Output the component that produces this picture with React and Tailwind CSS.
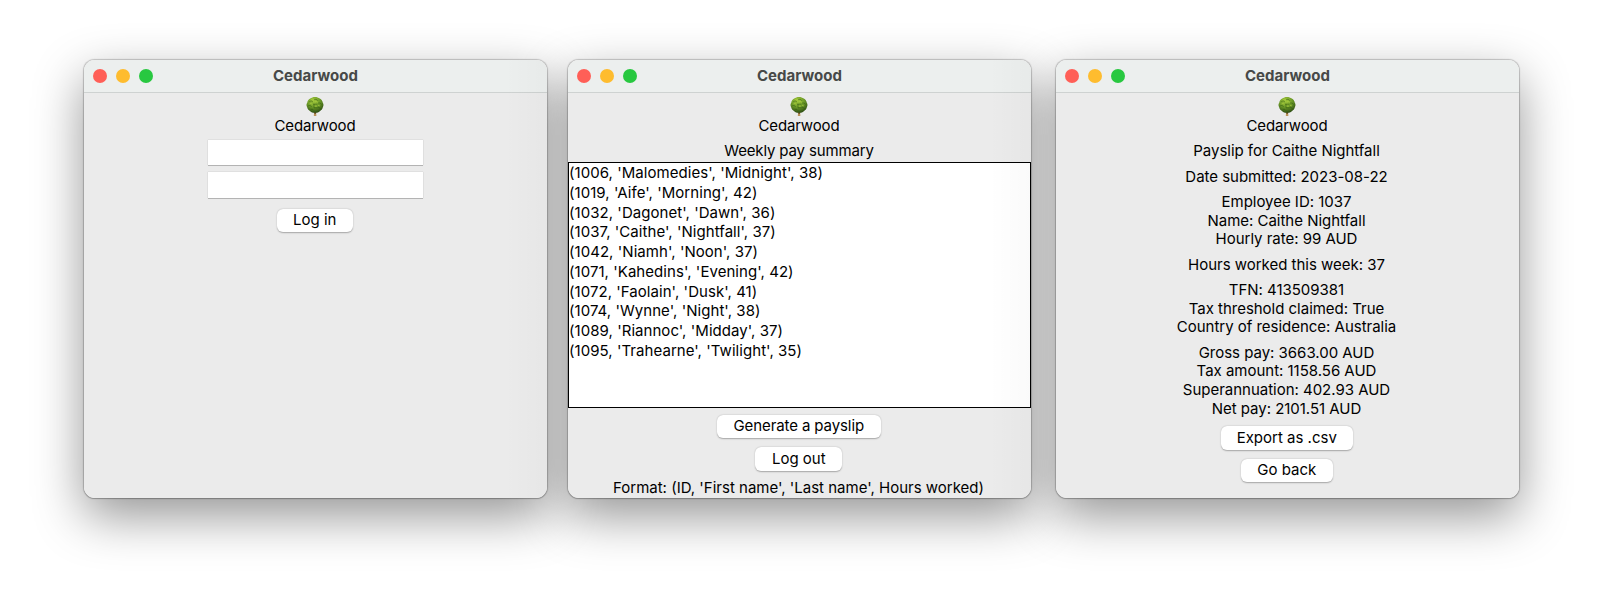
const TreeIcon = () => (
  <svg viewBox="0 0 18 20" className="mr-px block h-5 w-[18px] shrink-0">
    <defs>
      <radialGradient id="crown" cx="0.42" cy="0.25" r="0.78">
        <stop offset="0" stopColor="#a3c93c" />
        <stop offset="0.5" stopColor="#6c9a28" />
        <stop offset="1" stopColor="#2a4a12" />
      </radialGradient>
    </defs>
    <path d="M7.400 15h3.200l-.4 2.400.2 2.600H7.800l.2-2.600z" fill="#b8925a" />
    <path d="M8.300 15h1.600l-.2 3h-1.100z" fill="#5e3f1e" />
    <path
      d="M9 .9c1.900 0 3.400.5 4.800 1.600 1.700 1 2.600 2.300 2.900 3.900 1 1.500 1 3.200.2 4.700-.3 1.800-1.400 3.200-3.100 4.100-1.400 1.200-3 1.700-4.800 1.500-1.800.2-3.400-.3-4.800-1.500-1.700-.9-2.800-2.300-3.100-4.100-.8-1.500-.8-3.200.2-4.700.3-1.600 1.200-2.900 2.900-3.900C5.600 1.400 7.100.9 9 .9z"
      fill="url(#crown)"
    />
    <g fill="none" stroke="#2f5610" strokeWidth="0.8" strokeOpacity="0.65" strokeLinecap="round">
      <path d="M3.600 5.500c1.200-.9 2.400-.6 3.200.4M8.500 3.600c1.200-.6 2.600-.1 3.200.8M12.500 7c1.200-.3 2.300.2 2.900 1.200M7.500 8.200h3.500M2.600 9.600c1.100-.5 2.300 0 2.900 1M8 8.300v3.500h3M12 11.500c.9-.2 1.900.2 2.300.9M5 13.500c.9-.5 2-.2 2.600.6" />
    </g>
    <g fill="none" stroke="#bddb45" strokeWidth="0.8" strokeOpacity="0.7" strokeLinecap="round">
      <path d="M5 3.700c.7-.6 1.500-.8 2.300-.5M9.500 5.700c.7-.3 1.500-.1 2 .4M4 7.700c.7-.3 1.500-.1 2 .4M9 10.200h1.500M12.500 9.500l1 .3" />
    </g>
  </svg>
);

const Window = ({ shaded, children }) => (
  <section className="h-[438px] w-[463px] shrink-0 rounded-[11px] shadow-[0_0_1px_0.5px_rgba(0,0,0,0.2),0_1px_1px_rgba(0,0,0,0.12),0_18px_50px_rgba(0,0,0,0.42)]">
    <div className="relative z-10 flex h-full flex-col overflow-hidden rounded-[11px] bg-[#ebebeb]">
      <header className="grid h-[33px] shrink-0 grid-cols-[1fr_auto_1fr] items-center border-b border-[#ced2d1] bg-[#ecefee] px-[9px]">
        <div className="flex gap-[9px]">
          <span className="size-[14px] rounded-full bg-[#ff5f57]" />
          <span className="size-[14px] rounded-full bg-[#febc2e]" />
          <span className="size-[14px] rounded-full bg-[#28c840]" />
        </div>
        <h1 className="pb-[2px] text-[15px] leading-none font-bold tracking-[0.02px] text-[#474948]">Cedarwood</h1>
      </header>
      <div className="flex flex-1 flex-col items-center pt-[3px]">
        <TreeIcon />
        <p className="mt-px mr-px tracking-[-0.15px]">Cedarwood</p>
        {children}
      </div>
      {shaded && (
        <div className="pointer-events-none absolute inset-y-0 right-0 w-[42px] bg-linear-to-r from-black/0 to-black/[0.02]" />
      )}
    </div>
  </section>
);

const Button = ({ className, children }) => (
  <button
    className={`mr-[1.500px] flex h-[23.500px] shrink-0 items-center justify-center rounded-[6px] bg-white shadow-[0_0.5px_1.500px_rgba(0,0,0,0.3)] ${className}`}
  >
    {children}
  </button>
);

const Field = ({ className }) => (
  <input
    className={`h-[25.500px] w-[215px] bg-white shadow-[0_0_1px_rgba(0,0,0,0.25),0_1px_0.500px_rgba(0,0,0,0.2)] outline-none ${className}`}
  />
);

const employees = [
  "(1006, 'Malomedies', 'Midnight', 38)",
  "(1019, 'Aife', 'Morning', 42)",
  "(1032, 'Dagonet', 'Dawn', 36)",
  "(1037, 'Caithe', 'Nightfall', 37)",
  "(1042, 'Niamh', 'Noon', 37)",
  "(1071, 'Kahedins', 'Evening', 42)",
  "(1072, 'Faolain', 'Dusk', 41)",
  "(1074, 'Wynne', 'Night', 38)",
  "(1089, 'Riannoc', 'Midday', 37)",
  "(1095, 'Trahearne', 'Twilight', 35)",
];

const payslip = [
  ["Payslip for Caithe Nightfall"],
  ["Date submitted: 2023-08-22"],
  ["Employee ID: 1037", "Name: Caithe Nightfall", "Hourly rate: 99 AUD"],
  ["Hours worked this week: 37"],
  ["TFN: 413509381", "Tax threshold claimed: True", "Country of residence: Australia"],
  [
    "Gross pay: 3663.00 AUD",
    "Tax amount: 1158.56 AUD",
    "Superannuation: 402.93 AUD",
    "Net pay: 2101.51 AUD",
  ],
];

export default function App() {
  return (
    <main className="flex h-[600px] w-[1600px] overflow-hidden bg-white pt-[60px] pl-[84px] font-['Inter',sans-serif] text-[15px] leading-[18.600px] whitespace-nowrap text-black">
      <Window shaded>
        <Field className="mt-[4px] mr-px" />
        <Field className="mt-[7px] mr-px" />
        <Button className="mt-[11px] w-[76px]">Log in</Button>
      </Window>
      <div className="w-[21px] shrink-0" />
      <Window shaded>
        <p className="mt-[6.800px] mr-px tracking-[-0.15px]">Weekly pay summary</p>
        <ul className="mt-px h-[246px] w-full shrink-0 border border-black bg-white leading-[19.760px] tracking-[0.050px]">
          {employees.map((row) => (
            <li key={row}>{row}</li>
          ))}
        </ul>
        <Button className="mt-[7px] w-[164px] tracking-[-0.1px]">Generate a payslip</Button>
        <Button className="mt-[9px] w-[87px]">Log out</Button>
        <p className="mt-[8px] mr-[2px]">Format: (ID, 'First name', 'Last name', Hours worked)</p>
      </Window>
      <div className="w-[25px] shrink-0" />
      <Window>
        <div className="mt-[6.800px] mr-[2px] flex flex-col gap-[6.800px] text-center tracking-[-0.020px]">
          {payslip.map((group) => (
            <div key={group[0]}>
              {group.map((line) => (
                <p key={line}>{line}</p>
              ))}
            </div>
          ))}
        </div>
        <Button className="mt-[8px] w-[132px]">Export as .csv</Button>
        <Button className="mt-[9px] w-[92px]">Go back</Button>
      </Window>
    </main>
  );
}
